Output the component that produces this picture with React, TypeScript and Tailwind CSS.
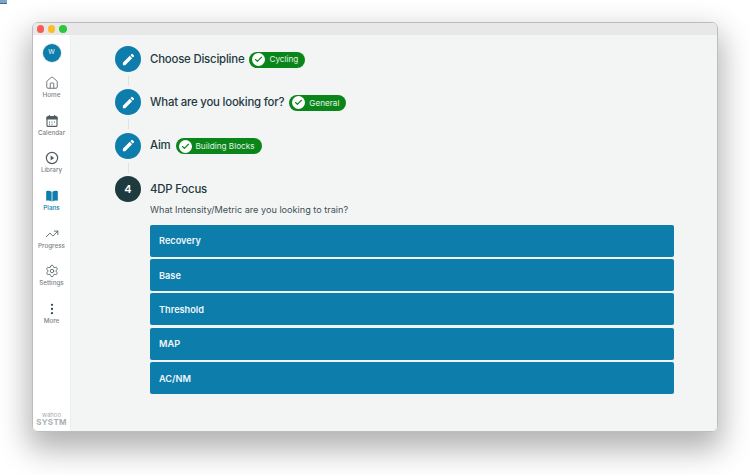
import React from "react";
import { Home, TrendingUp, Settings, Check } from "lucide-react";

const navItems = [
  { label: "Home", icon: <Home size={14} strokeWidth={1.4} /> },
  { label: "Calendar", icon: <CalendarIcon /> },
  { label: "Library", icon: <LibraryIcon /> },
  { label: "Plans", icon: <PlansIcon />, active: true },
  { label: "Progress", icon: <TrendingUp size={14} strokeWidth={1.5} /> },
  { label: "Settings", icon: <Settings size={14} strokeWidth={1.4} /> },
  { label: "More", icon: <MoreIcon /> },
];

const steps = [
  { title: "Choose Discipline", value: "Cycling" },
  { title: "What are you looking for?", value: "General" },
  { title: "Aim", value: "Building Blocks" },
];

const options = ["Recovery", "Base", "Threshold", "MAP", "AC/NM"];

function CalendarIcon() {
  return (
    <svg width="14" height="14" viewBox="0 0 14 14" fill="none" stroke="#4e5d61" strokeWidth="1.1">
      <rect x="2" y="2.6" width="10" height="9.8" rx="1" />
      <path d="M2 3.6h10v1.4H2z" fill="#4e5d61" />
      <path d="M4.4 1v2M9.6 1v2" />
      <path d="M4 8h1M6.5 8h1M9 8h1M4 10.2h1M6.5 10.2h1" strokeWidth="1" />
    </svg>
  );
}

function LibraryIcon() {
  return (
    <svg width="14" height="14" viewBox="0 0 14 14" fill="none" stroke="#4e5d61" strokeWidth="1.2">
      <circle cx="7" cy="7" r="5.6" />
      <path d="M5.6 4.6v4.8L9.2 7z" fill="#4e5d61" stroke="none" />
    </svg>
  );
}

function PlansIcon() {
  return (
    <svg width="14" height="14" viewBox="0 0 14 14" fill="#0d7dab">
      <path d="M1.2 2.2c1.7-.6 3.9-.5 5.4.6v9.6c-1.5-1.1-3.7-1.2-5.4-.6z" />
      <path d="M12.8 2.2c-1.7-.6-3.9-.5-5.4.6v9.6c1.5-1.1 3.7-1.2 5.4-.6z" />
    </svg>
  );
}

function MoreIcon() {
  return (
    <svg width="14" height="14" viewBox="0 0 14 14" fill="#3f4e52">
      <circle cx="7" cy="2.8" r="1.15" />
      <circle cx="7" cy="7" r="1.15" />
      <circle cx="7" cy="11.2" r="1.15" />
    </svg>
  );
}

function EditIcon() {
  return (
    <svg width="15" height="15" viewBox="0 0 24 24" fill="white">
      <path d="M3 17.25V21h3.75L17.81 9.94l-3.75-3.75L3 17.25zM20.71 7.04a1 1 0 0 0 0-1.41l-2.34-2.34a1 1 0 0 0-1.41 0l-1.83 1.83 3.75 3.75 1.83-1.83z" />
    </svg>
  );
}

function Step({ title, value }: { title: string; value: string }) {
  return (
    <div className="h-[26px] flex items-center">
      <div className="relative w-[26px] h-[26px] rounded-full bg-[#0d7dab] flex items-center justify-center shrink-0">
        <EditIcon />
        <div className="absolute left-[12.5px] top-[30px] w-px h-[10px] bg-[#dfe2e2]" />
      </div>
      <span className="ml-[9px] pt-[1px] text-[11.4px] leading-none font-medium tracking-[-0.2px] text-[#1f3a3f]">{title}</span>
      <div className="ml-[5px] mt-[1px] h-[16px] rounded-full bg-[#0a8519] flex items-center pl-[3px] pr-[7px] gap-[4px]">
        <div className="w-[13px] h-[13px] rounded-full bg-white flex items-center justify-center text-[#0a8519]">
          <Check size={9} strokeWidth={3} />
        </div>
        <span className="text-[8.2px] leading-none font-normal text-[#e6f3e8]">{value}</span>
      </div>
    </div>
  );
}

export default function App() {
  return (
    <div className="relative w-[750px] h-[475px] bg-white overflow-hidden pt-[22px] pl-[32px] font-['Inter',sans-serif]">
      {/* broken image marker */}
      <div className="absolute left-0 top-0 w-[7px] h-[4px] bg-[#7fa3c4] border-b border-[#3f6f96]" />

      <div className="w-[686px] h-[410px] rounded-[6px] overflow-hidden flex flex-col border border-[#bdbdbd] shadow-[0_14px_30px_4px_rgba(0,0,0,0.3)]">
        <div className="h-[12px] bg-[#e8e8e8] flex items-center gap-[4px] pl-[3.5px] shrink-0">
          <div className="w-[7.4px] h-[7.4px] rounded-full bg-[#fc5b57]" />
          <div className="w-[7.4px] h-[7.4px] rounded-full bg-[#fdbc2e]" />
          <div className="w-[7.4px] h-[7.4px] rounded-full bg-[#29c83f]" />
        </div>

        <div className="flex flex-1 min-h-0">
          <div className="w-[38px] bg-white flex flex-col items-center shrink-0 border-r border-[#eceeee]">
            <div className="mt-[9px] w-[18px] h-[18px] rounded-full bg-[#0d7dab] flex items-center justify-center text-[#dcecf3] text-[6.5px] font-medium shadow-[0_0_0_1px_#e6eaec]">
              W
            </div>
            <div className="mt-[14px] flex flex-col gap-[14.5px] w-full">
              {navItems.map((item) => (
                <div
                  key={item.label}
                  className={`h-[23.2px] flex flex-col items-center ${item.active ? "text-[#0d7dab]" : "text-[#4e5d61]"}`}
                >
                  {item.icon}
                  <span className={`mt-[1px] text-[6.3px] leading-[8px] font-medium ${item.active ? "text-[#0d7dab]" : "text-[#7b8689]"}`}>
                    {item.label}
                  </span>
                </div>
              ))}
            </div>
            <div className="mt-auto mb-[4px] flex flex-col items-center">
              <span className="text-[6px] leading-[7px] text-[#a4abaf]">wahoo</span>
              <span className="text-[8px] leading-[9px] font-bold tracking-[0.3px] text-[#a9b1b6]">SYSTM</span>
            </div>
          </div>

          <div className="flex-1 bg-[#f3f5f5] pl-[44px] pr-[43px] pt-[11px]">
            <div className="flex flex-col gap-[17.3px]">
              {steps.map((s) => (
                <Step key={s.title} title={s.title} value={s.value} />
              ))}
              <div className="flex flex-col">
                <div className="flex items-center h-[26px]">
                  <div className="w-[26px] h-[26px] rounded-full bg-[#1d3a3f] flex items-center justify-center text-white text-[11px] font-semibold shrink-0">
                    4
                  </div>
                  <span className="ml-[9px] pt-[1px] text-[11.4px] leading-none font-medium tracking-[-0.2px] text-[#1f3a3f]">4DP Focus</span>
                </div>
                <p className="ml-[35px] mt-[1px] text-[9.15px] leading-[14px] text-[#3c4f53]">
                  What Intensity/Metric are you looking to train?
                </p>
                <div className="ml-[35px] mt-[8px] flex flex-col gap-[2.3px]">
                  {options.map((o) => (
                    <div key={o} className="h-[32px] rounded-[2px] bg-[#0d7dab] flex items-center pl-[9px] pt-[1px] text-[9.2px] font-semibold text-[#f0f7fa]">
                      {o}
                    </div>
                  ))}
                </div>
              </div>
            </div>
          </div>
        </div>
      </div>
    </div>
  );
}
